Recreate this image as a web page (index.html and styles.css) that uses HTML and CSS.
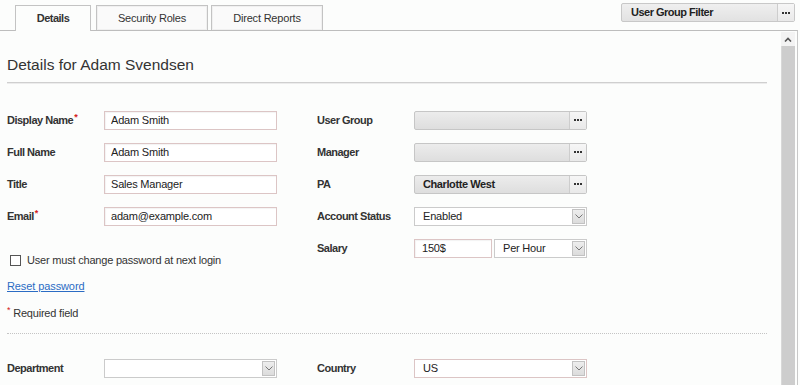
FILE: index.html
```html
<!DOCTYPE html>
<html lang="en">
<head>
  <meta charset="UTF-8" />
  <title>User Details</title>
  <link rel="stylesheet" href="styles.css">
</head>
<body>

  <div class="topbar">
    <div class="tabs">
      <div class="tab active">Details</div>
      <div class="tab">Security Roles</div>
      <div class="tab">Direct Reports</div>
    </div>
    <div class="filter">
      <span class="filter-text">User Group Filter</span>
      <span class="dots"><svg width="8" height="2" viewBox="0 0 8 2"><rect x="0" y="0" width="2" height="2"/><rect x="3" y="0" width="2" height="2"/><rect x="6" y="0" width="2" height="2"/></svg></span>
    </div>
  </div>

  <div class="panel">
    <div class="content">
      <h2>Details for Adam Svendsen</h2>
      <hr class="line">

      <div class="columns">
        <div class="col">
          <div class="row">
            <label>Display Name<span class="req">*</span></label>
            <input class="text pink" type="text" value="Adam Smith" />
          </div>
          <div class="row">
            <label>Full Name</label>
            <input class="text pink" type="text" value="Adam Smith" />
          </div>
          <div class="row">
            <label>Title</label>
            <input class="text pink" type="text" value="Sales Manager" />
          </div>
          <div class="row">
            <label>Email<span class="req">*</span></label>
            <input class="text pink" type="text" value="adam@example.com" />
          </div>

          <div class="check-row">
            <span class="checkbox"></span>User must change password at next login
          </div>
          <a class="reset" href="#">Reset password</a>
          <div class="required"><span class="req">*</span> Required field</div>
        </div>

        <div class="col">
          <div class="row">
            <label>User Group</label>
            <div class="lookup">
              <span class="lookup-value"></span>
              <span class="dots"><svg width="8" height="2" viewBox="0 0 8 2"><rect x="0" y="0" width="2" height="2"/><rect x="3" y="0" width="2" height="2"/><rect x="6" y="0" width="2" height="2"/></svg></span>
            </div>
          </div>
          <div class="row">
            <label>Manager</label>
            <div class="lookup">
              <span class="lookup-value"></span>
              <span class="dots"><svg width="8" height="2" viewBox="0 0 8 2"><rect x="0" y="0" width="2" height="2"/><rect x="3" y="0" width="2" height="2"/><rect x="6" y="0" width="2" height="2"/></svg></span>
            </div>
          </div>
          <div class="row">
            <label>PA</label>
            <div class="lookup">
              <span class="lookup-value">Charlotte West</span>
              <span class="dots"><svg width="8" height="2" viewBox="0 0 8 2"><rect x="0" y="0" width="2" height="2"/><rect x="3" y="0" width="2" height="2"/><rect x="6" y="0" width="2" height="2"/></svg></span>
            </div>
          </div>
          <div class="row">
            <label>Account Status</label>
            <div class="select">
              <span class="select-value">Enabled</span>
              <span class="arrow"><svg width="8" height="5" viewBox="0 0 8 5"><polyline points="0.5,0.5 4,4 7.5,0.5" fill="none" stroke="#777" stroke-width="1"/></svg></span>
            </div>
          </div>
          <div class="row salary">
            <label>Salary</label>
            <input class="text pink amount" type="text" value="150$" />
            <div class="select rate">
              <span class="select-value">Per Hour</span>
              <span class="arrow"><svg width="8" height="5" viewBox="0 0 8 5"><polyline points="0.5,0.5 4,4 7.5,0.5" fill="none" stroke="#777" stroke-width="1"/></svg></span>
            </div>
          </div>
        </div>
      </div>

      <hr class="line dotted">

      <div class="columns">
        <div class="col">
          <div class="row">
            <label>Department</label>
            <div class="select">
              <span class="select-value"></span>
              <span class="arrow"><svg width="8" height="5" viewBox="0 0 8 5"><polyline points="0.5,0.5 4,4 7.5,0.5" fill="none" stroke="#777" stroke-width="1"/></svg></span>
            </div>
          </div>
        </div>
        <div class="col">
          <div class="row">
            <label>Country</label>
            <div class="select pink">
              <span class="select-value">US</span>
              <span class="arrow"><svg width="8" height="5" viewBox="0 0 8 5"><polyline points="0.5,0.5 4,4 7.5,0.5" fill="none" stroke="#777" stroke-width="1"/></svg></span>
            </div>
          </div>
        </div>
      </div>
    </div>

    <div class="scrollbar">
      <div class="scroll-up"><svg width="8" height="5" viewBox="0 0 8 5"><polyline points="1,4.5 4,1.5 7,4.5" fill="none" stroke="#555" stroke-width="1.6"/></svg></div>
      <div class="thumb"></div>
    </div>
  </div>

</body>
</html>
```

FILE: styles.css
```css
body {
  margin: 0;
  height: 385px;
  overflow: hidden;
  font-family: "Liberation Sans", Arial, sans-serif;
  font-size: 11px;
  color: #333;
  background: #fcfdfc;
}

/* top strip: tabs + filter */

.topbar {
  display: flex;
  height: 30px;
}

.tabs {
  display: flex;
  align-items: flex-end;
  padding-left: 15px;
}

.tab {
  box-sizing: border-box;
  width: 112px;
  height: 25px;
  margin-right: 3px;
  border: 1px solid #c3c3c3;
  border-bottom: none;
  background: #fafafa;
  box-shadow: inset 0 0 0 1px #f0f0f0;
  text-align: center;
  line-height: 24px;
  letter-spacing: -0.2px;
  color: #333;
}

.tab.active {
  position: relative;
  z-index: 1;
  width: 76px;
  height: 26px;
  margin-right: 5px;
  margin-bottom: -1px;
  background: #fcfdfc;
  box-shadow: none;
  font-weight: bold;
  letter-spacing: -0.5px;
}

.filter {
  display: flex;
  box-sizing: border-box;
  width: 174px;
  height: 19px;
  margin: 3px 5px 0 auto;
  border: 1px solid #c8c8c8;
  border-radius: 2px;
  background: linear-gradient(#efefef, #e2e2e2);
}

.filter-text {
  flex: 1;
  padding-left: 9px;
  line-height: 17px;
  font-weight: bold;
  letter-spacing: -0.5px;
  color: #222;
}

.dots {
  display: flex;
  align-items: center;
  justify-content: center;
  width: 16px;
  border-left: 1px solid #cdcdcd;
  background: linear-gradient(#f6f6f6, #e9e9e9);
}

.dots svg {
  fill: #333;
}

/* main panel */

.panel {
  display: flex;
  width: 797px;
  height: 354px;
  border-top: 1px solid #bdbdbd;
  border-right: 1px solid #c8c8c8;
}

.content {
  flex: 1;
  padding: 0 14px 0 7px;
}

h2 {
  margin: 24px 0 0;
  font-size: 15.5px;
  font-weight: normal;
  line-height: 20px;
  color: #333;
}

.line {
  height: 0;
  margin: 7px 0 20px;
  border: none;
  border-top: 1px solid #cfcfcf;
  border-bottom: 1px solid #ececec;
}

.line.dotted {
  margin: 10px 0 18px;
  border-top: 1px dotted #c4c4c4;
  border-bottom: none;
}

.columns {
  display: flex;
  gap: 40px;
}

.col {
  width: 270px;
}

.row {
  display: flex;
  align-items: center;
  height: 32px;
}

.row label {
  width: 97px;
  line-height: 14px;
  font-weight: bold;
  letter-spacing: -0.5px;
  color: #333;
}

.req {
  color: #d42020;
  font-size: 9px;
  font-weight: bold;
  line-height: 0;
  vertical-align: 4px;
  margin-left: 1px;
}

input.text {
  box-sizing: border-box;
  width: 173px;
  height: 19px;
  padding: 0 6px;
  border: 1px solid #cdcdcd;
  background: #fff;
  box-shadow: inset 1px 1px 1px rgba(0, 0, 0, 0.05);
  font-family: "Liberation Sans", Arial, sans-serif;
  font-size: 11px;
  letter-spacing: -0.2px;
  color: #222;
  outline: none;
}

.pink {
  border-color: #dcc5c5 !important;
}

.lookup {
  display: flex;
  box-sizing: border-box;
  width: 173px;
  height: 19px;
  border: 1px solid #c6c6c6;
  border-radius: 2px;
  background: linear-gradient(#ececec, #dedede);
}

.lookup-value {
  flex: 1;
  padding-left: 8px;
  line-height: 17px;
  font-weight: bold;
  letter-spacing: -0.4px;
  color: #222;
}

.select {
  display: flex;
  box-sizing: border-box;
  width: 173px;
  height: 19px;
  border: 1px solid #cbcbcb;
  background: #fff;
}

.select-value {
  flex: 1;
  padding-left: 8px;
  line-height: 17px;
  letter-spacing: -0.2px;
  color: #222;
}

.arrow {
  display: flex;
  align-items: center;
  justify-content: center;
  width: 13px;
  margin: 1px;
  border: 1px solid #c2c2c2;
  box-sizing: border-box;
  background: linear-gradient(#ededed, #dcdcdc);
}

.salary .amount {
  width: 78px;
  padding-left: 7px;
}

.salary .rate {
  width: 93px;
  margin-left: 2px;
}

.check-row {
  display: flex;
  align-items: center;
  height: 20px;
  margin-top: 18px;
  letter-spacing: -0.2px;
}

.checkbox {
  box-sizing: border-box;
  width: 11px;
  height: 11px;
  margin: 0 6px 0 3px;
  border: 1px solid #555;
  background: #fff;
}

.reset {
  display: block;
  width: max-content;
  margin-top: 6px;
  line-height: 20px;
  color: #2b6cc4;
  letter-spacing: -0.1px;
}

.required {
  margin-top: 7px;
  line-height: 20px;
  letter-spacing: -0.2px;
}

.required .req {
  margin-left: 0;
  font-weight: normal;
}

/* scrollbar */

.scrollbar {
  display: flex;
  flex-direction: column;
  width: 14px;
  margin: 1px 2px 0 0;
}

.scroll-up {
  display: flex;
  align-items: center;
  justify-content: center;
  height: 14px;
  background: #f3f3f3;
}

.thumb {
  flex: 1;
  background: #cdcdcd;
  border-left: 1px solid #d8d8d8;
}
```
